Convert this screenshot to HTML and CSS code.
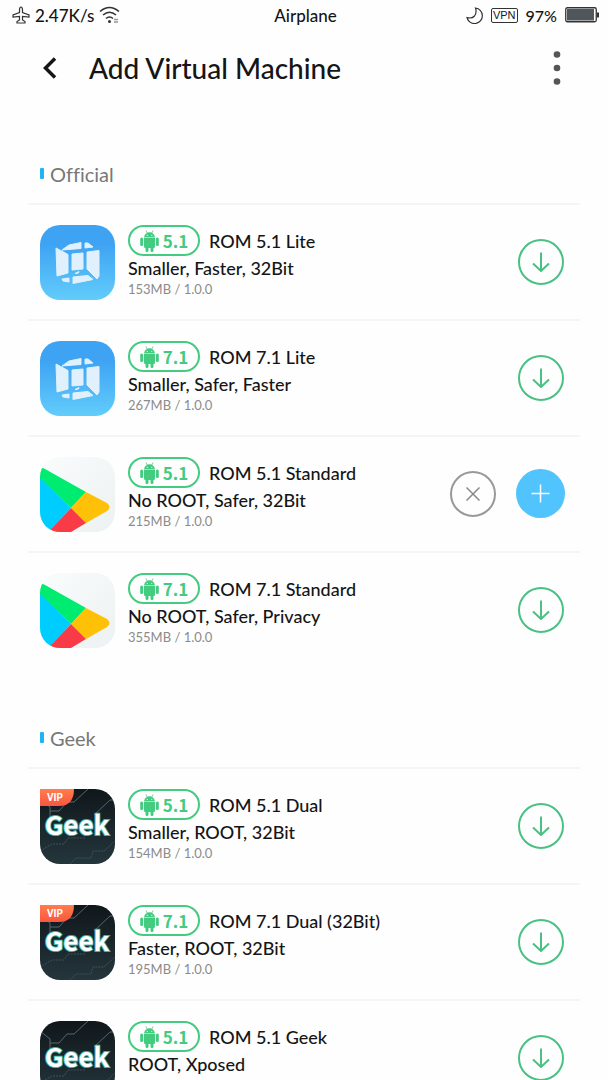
FILE: index.html
```html
<!DOCTYPE html>
<html lang="en">
<head>
  <meta charset="UTF-8" />
  <meta name="viewport" content="width=device-width, initial-scale=1.0"/>
  <title>Add Virtual Machine</title>
  <link rel="stylesheet" href="styles.css">
</head>
<body>

  <!-- shared icons -->
  <svg class="sprite" width="0" height="0" aria-hidden="true">
    <defs>
      <linearGradient id="sky" x1="0" y1="0" x2="0" y2="1">
        <stop offset="0.25" stop-color="#3ea3f3"/>
        <stop offset="1" stop-color="#62ccfb"/>
      </linearGradient>
      <linearGradient id="night" x1="0" y1="0" x2="0" y2="1">
        <stop offset="0" stop-color="#10171b"/>
        <stop offset="1" stop-color="#24363c"/>
      </linearGradient>
      <linearGradient id="vipFill" x1="0" y1="0" x2="0" y2="1">
        <stop offset="0" stop-color="#ff7d4d"/>
        <stop offset="1" stop-color="#f9563f"/>
      </linearGradient>
      <linearGradient id="paper" x1="0" y1="0" x2="1" y2="1">
        <stop offset="0" stop-color="#fafcfc"/>
        <stop offset="1" stop-color="#ecf1f2"/>
      </linearGradient>
    </defs>
    <symbol id="cube" viewBox="0 0 75 75">
      <rect width="75" height="75" fill="url(#sky)"/>
      <g fill="#e0f1fd" stroke="#e0f1fd" stroke-linejoin="round">
        <path d="M22 25L29 20L41 17.500V23.500Z"/>
        <path d="M45 18L48 18L53 22L45 23Z"/>
        <path d="M16 23L28 29.500V48L17 51Z"/>
        <path d="M32 29L43 28V44L32 45Z"/>
        <path d="M47 27L59 25.500V51L57 54L47 44Z"/>
        <path d="M35 48.500L39 46.500L38.500 48Z"/>
        <path d="M22 54L29 53V57L23 56Z"/>
        <path d="M33 52L48 50.500L53 54.500L33 58.500Z"/>
      </g>
    </symbol>
    <symbol id="play" viewBox="0 0 75 75">
      <rect width="75" height="75" fill="url(#paper)"/>
      <path d="M0 20L31 51L10 73L0 75Z" fill="#00cdff"/>
      <path d="M0 21V12Q2 10 5 12L46 35L31 51Z" fill="#00ec70"/>
      <path d="M46 35L67 46Q72 50 67 54L46 66L31 51Z" fill="#ffc107"/>
      <path d="M31 51L46 66L31 75H8Z" fill="#f93b48"/>
    </symbol>
    <symbol id="geek" viewBox="0 0 75 75">
      <rect width="75" height="75" fill="url(#night)"/>
      <g fill="none" stroke="#56666b" stroke-width="1">
        <path d="M48 0L34 13H27L19 22H10V30M0 10L10 18V22"/>
        <path d="M75 11H70L54 26"/>
        <path d="M0 62L12 55H24L28 49H46M30 75L36 69H51L53 62H64L75 52" stroke="#3c545b" stroke-dasharray="2 1"/>
      </g>
      <text class="geek-word" x="37" y="46" text-anchor="middle">Geek</text>
    </symbol>
    <symbol id="vip" viewBox="0 0 75 75">
      <path d="M0 0H34Q34 17 19 17H0Z" fill="url(#vipFill)"/>
      <text class="vip-word" x="15" y="12" text-anchor="middle">VIP</text>
    </symbol>
    <symbol id="android" viewBox="0 0 19 22">
      <path d="M4 7.500Q4.200 4.300 6.800 2.900L5.500 0.600L6 0.300L7.300 2.600Q9.500 1.800 11.700 2.600L13 0.300L13.500 0.600L12.200 2.900Q14.800 4.300 15 7.500Z"/>
      <path d="M4 8.100H15V16.500Q15 18 13.500 18V20.500A1.500 1.500 0 0 1 10.500 20.500V18H8.500V20.500A1.500 1.500 0 0 1 5.500 20.500V18Q4 18 4 16.500Z"/>
      <rect x="0.200" y="7.500" width="3" height="8.500" rx="1.500"/>
      <rect x="15.800" y="7.500" width="3" height="8.500" rx="1.500"/>
      <circle cx="7.200" cy="5.300" r="0.600" fill="#fff"/>
      <circle cx="11.800" cy="5.300" r="0.600" fill="#fff"/>
    </symbol>
    <symbol id="down" viewBox="0 0 20 20">
      <path d="M10 0.500V19M2 11.500L10 19L18 11.500"/>
    </symbol>
  </svg>

  <div class="statusbar">
    <div class="status-left">
      <svg class="plane" width="18" height="18" viewBox="0 0 18 18">
        <path d="M9 1C8 1 7.500 2.500 7.500 4V6.500L1 9V11L7.500 10.500V14L5 15.500V17H13V15.500L10.500 14V10.500L17 11V9L10.500 6.500V4C10.500 2.500 10 1 9 1Z"/>
      </svg>
      <span>2.47K/s</span>
      <svg class="wifi" width="21" height="18" viewBox="0 0 21 18">
        <path d="M1 5.500Q10.500 -2.500 20 5.500M4 9Q10.500 3.500 17 9M7 12.500Q10.500 9.500 14 12.500"/>
        <circle cx="10.500" cy="15.500" r="1.500"/>
        <path d="M15.500 13.500H18.500M15.500 16H18.500" stroke-dasharray="1 1"/>
      </svg>
    </div>
    <span>Airplane</span>
    <div class="status-right">
      <svg class="moon" width="17" height="17" viewBox="0 0 17 17">
        <path d="M9.500 1A7.800 7.800 0 1 1 1 10.500Q6 12 8.500 9Q11 5.500 9.500 1Z"/>
      </svg>
      <span class="vpn">VPN</span>
      <span class="percent">97%</span>
      <svg class="battery" width="34" height="16" viewBox="0 0 34 16">
        <rect x="0.750" y="0.750" width="30.500" height="14" rx="1.500" fill="none" stroke="#333" stroke-width="1.300"/>
        <rect x="2" y="2" width="27" height="11.500" fill="#50565a"/>
        <rect x="32" y="5.500" width="2" height="5" fill="#333"/>
      </svg>
    </div>
  </div>

  <header class="topbar">
    <button class="back" aria-label="Back">
      <svg width="14" height="24" viewBox="0 0 14 24"><path d="M12 2.500L2.500 12L12 21.500"/></svg>
    </button>
    <h1>Add Virtual Machine</h1>
    <button class="more" aria-label="More options">
      <svg width="8" height="34" viewBox="0 0 8 34"><circle cx="4" cy="3.500" r="3.300"/><circle cx="4" cy="17" r="3.300"/><circle cx="4" cy="30.500" r="3.300"/></svg>
    </button>
  </header>

  <main>
    <section>
      <h2>Official</h2>
      <ul class="rom-list">
        <li class="rom">
          <svg class="rom-icon"><use href="#cube"/></svg>
          <div class="rom-info">
            <div class="rom-head">
              <span class="badge"><svg width="19" height="22"><use href="#android"/></svg>5.1</span>
              <h3>ROM 5.1 Lite</h3>
            </div>
            <p class="tags">Smaller, Faster, 32Bit</p>
            <p class="meta">153MB / 1.0.0</p>
          </div>
          <div class="actions">
            <button class="round get" aria-label="Download ROM 5.1 Lite"><svg width="20" height="20"><use href="#down"/></svg></button>
          </div>
        </li>
        <li class="rom">
          <svg class="rom-icon"><use href="#cube"/></svg>
          <div class="rom-info">
            <div class="rom-head">
              <span class="badge"><svg width="19" height="22"><use href="#android"/></svg>7.1</span>
              <h3>ROM 7.1 Lite</h3>
            </div>
            <p class="tags">Smaller, Safer, Faster</p>
            <p class="meta">267MB / 1.0.0</p>
          </div>
          <div class="actions">
            <button class="round get" aria-label="Download ROM 7.1 Lite"><svg width="20" height="20"><use href="#down"/></svg></button>
          </div>
        </li>
        <li class="rom">
          <svg class="rom-icon"><use href="#play"/></svg>
          <div class="rom-info">
            <div class="rom-head">
              <span class="badge"><svg width="19" height="22"><use href="#android"/></svg>5.1</span>
              <h3>ROM 5.1 Standard</h3>
            </div>
            <p class="tags">No ROOT, Safer, 32Bit</p>
            <p class="meta">215MB / 1.0.0</p>
          </div>
          <div class="actions">
            <button class="round remove" aria-label="Remove ROM 5.1 Standard"><svg width="14" height="14" viewBox="0 0 14 14"><path d="M0.500 0.500L13.500 13.500M13.500 0.500L0.500 13.500"/></svg></button>
            <button class="round add" aria-label="Add ROM 5.1 Standard"><svg width="19" height="19" viewBox="0 0 19 19"><path d="M9.500 0.500V18.500M0.500 9.500H18.500"/></svg></button>
          </div>
        </li>
        <li class="rom">
          <svg class="rom-icon"><use href="#play"/></svg>
          <div class="rom-info">
            <div class="rom-head">
              <span class="badge"><svg width="19" height="22"><use href="#android"/></svg>7.1</span>
              <h3>ROM 7.1 Standard</h3>
            </div>
            <p class="tags">No ROOT, Safer, Privacy</p>
            <p class="meta">355MB / 1.0.0</p>
          </div>
          <div class="actions">
            <button class="round get" aria-label="Download ROM 7.1 Standard"><svg width="20" height="20"><use href="#down"/></svg></button>
          </div>
        </li>
      </ul>
    </section>

    <section>
      <h2>Geek</h2>
      <ul class="rom-list">
        <li class="rom">
          <svg class="rom-icon vip"><use href="#geek"/><use href="#vip"/></svg>
          <div class="rom-info">
            <div class="rom-head">
              <span class="badge"><svg width="19" height="22"><use href="#android"/></svg>5.1</span>
              <h3>ROM 5.1 Dual</h3>
            </div>
            <p class="tags">Smaller, ROOT, 32Bit</p>
            <p class="meta">154MB / 1.0.0</p>
          </div>
          <div class="actions">
            <button class="round get" aria-label="Download ROM 5.1 Dual"><svg width="20" height="20"><use href="#down"/></svg></button>
          </div>
        </li>
        <li class="rom">
          <svg class="rom-icon vip"><use href="#geek"/><use href="#vip"/></svg>
          <div class="rom-info">
            <div class="rom-head">
              <span class="badge"><svg width="19" height="22"><use href="#android"/></svg>7.1</span>
              <h3>ROM 7.1 Dual (32Bit)</h3>
            </div>
            <p class="tags">Faster, ROOT, 32Bit</p>
            <p class="meta">195MB / 1.0.0</p>
          </div>
          <div class="actions">
            <button class="round get" aria-label="Download ROM 7.1 Dual"><svg width="20" height="20"><use href="#down"/></svg></button>
          </div>
        </li>
        <li class="rom">
          <svg class="rom-icon"><use href="#geek"/></svg>
          <div class="rom-info">
            <div class="rom-head">
              <span class="badge"><svg width="19" height="22"><use href="#android"/></svg>5.1</span>
              <h3>ROM 5.1 Geek</h3>
            </div>
            <p class="tags">ROOT, Xposed</p>
          </div>
          <div class="actions">
            <button class="round get" aria-label="Download ROM 5.1 Geek"><svg width="20" height="20"><use href="#down"/></svg></button>
          </div>
        </li>
      </ul>
    </section>
  </main>

</body>
</html>
```
FILE: styles.css
```css
* {
  box-sizing: border-box;
}
body {
  margin: 0;
  background: #fefefe;
  color: #151515;
  font-family: Lato, sans-serif;
  font-variant-ligatures: none;
}
h1, h2, h3, p, ul {
  margin: 0;
  padding: 0;
}
svg {
  display: block;
  flex: none;
}
button {
  border: 0;
  padding: 0;
  background: none;
  cursor: pointer;
}
.sprite {
  position: absolute;
}

/* status bar */
.statusbar {
  display: grid;
  grid-template-columns: 1fr auto 1fr;
  align-items: center;
  height: 30px;
  padding: 0 9px 0 12px;
  font-size: 17px;
  font-weight: 500;
}
.status-left, .status-right {
  display: flex;
  align-items: center;
}
.status-left {
  gap: 5px;
}
.status-right {
  justify-content: flex-end;
  gap: 8px;
}
.plane, .wifi, .moon {
  fill: none;
  stroke: #333;
  stroke-width: 1.2;
}
.wifi {
  stroke-width: 1.6;
}
.wifi circle {
  fill: #333;
  stroke: none;
}
.vpn {
  border: 1px solid #333;
  border-radius: 2px;
  padding: 0 1px;
  font: 11px/13px "Liberation Sans", sans-serif;
}
.percent {
  font-size: 16px;
}

/* title bar */
.topbar {
  display: flex;
  align-items: center;
  height: 76px;
  padding: 0 47px 0 43px;
}
.topbar h1 {
  flex: 1;
  margin-left: 32px;
  font-size: 28px;
  font-weight: 500;
}
.back path {
  fill: none;
  stroke: #151515;
  stroke-width: 3.5;
}
.more circle {
  fill: #555;
}

/* rom lists */
main {
  padding: 48px 28px 0;
}
section {
  margin-bottom: 51px;
}
h2 {
  display: flex;
  align-items: center;
  gap: 6px;
  height: 49px;
  padding: 0 12px 10px;
  color: #777;
  font-size: 20px;
  font-weight: 400;
}
h2::before {
  content: "";
  width: 4px;
  height: 11px;
  border-radius: 1px;
  background: #20b4f3;
}
.rom-list {
  list-style: none;
}
.rom {
  display: flex;
  gap: 13px;
  padding: 20px 15px 19px 12px;
  border-top: 2px solid #f4f5f6;
}
.rom-icon {
  width: 75px;
  height: 75px;
  border-radius: 20px;
  overflow: hidden;
}
.rom-icon.vip {
  border-top-left-radius: 0;
}
.geek-word {
  fill: #fff;
  stroke: #3fb5ac;
  stroke-width: 2px;
  paint-order: stroke;
  font: 700 26px "Noto Sans CJK SC", sans-serif;
}
.vip-word {
  fill: #fff;
  font: 700 10px Roboto, sans-serif;
}
.rom-info {
  flex: 1;
}
.rom-head {
  display: flex;
  align-items: center;
  gap: 9px;
}
.rom-head h3 {
  font-size: 18px;
  font-weight: 500;
}
.badge {
  display: flex;
  align-items: center;
  justify-content: center;
  gap: 4px;
  width: 72px;
  height: 31px;
  border: 2px solid #43cb80;
  border-radius: 16px;
  color: #43cb80;
  fill: #43cb80;
  font: 700 17px/27px "Noto Sans CJK SC", sans-serif;
}
.tags {
  font-size: 18px;
  font-weight: 500;
  line-height: 24px;
}
.meta {
  color: #8b8b8b;
  font-size: 13px;
  line-height: 18px;
}

/* round buttons */
.actions {
  display: flex;
  align-items: center;
  gap: 20px;
  padding-bottom: 2px;
}
.round {
  display: flex;
  align-items: center;
  justify-content: center;
  width: 46px;
  height: 46px;
  border: 2px solid #48c183;
  border-radius: 50%;
  fill: none;
  stroke: #48c183;
  stroke-width: 2;
}
.get {
  margin-right: 1px;
}
.remove {
  border-color: #999;
  stroke: #888;
  stroke-width: 1.5;
}
.add {
  width: 49px;
  height: 49px;
  border: 0;
  background: #51c3fd;
  stroke: #fff;
  stroke-width: 1.5;
}
```
